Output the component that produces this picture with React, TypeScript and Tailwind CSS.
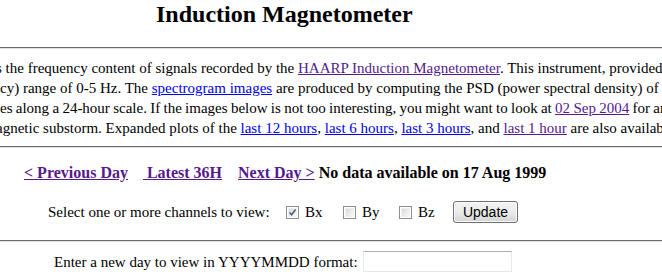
import React from "react";

function Hr() {
  return <div className="h-[2px] w-full border-t border-t-[#6a6a6a] border-b border-b-[#e2e2e2]" />;
}

function Checkbox({ checked }: { checked?: boolean }) {
  return (
    <span className="relative inline-block w-[13px] h-[13px] border border-[#8e8f8f] bg-white shrink-0">
      <span className="absolute inset-[1px] border border-[#f0f0f0] bg-gradient-to-br from-[#d9d9d9] to-[#fafafa]" />
      {checked && (
        <svg className="absolute left-[1px] top-[1px]" width="9" height="9" viewBox="0 0 9 9">
          <path d="M1.5 4.5 L3.6 6.8 L7.6 1.6" fill="none" stroke="#4a5f87" strokeWidth="1.6" />
        </svg>
      )}
    </span>
  );
}

const visited = "text-[#551a8b] underline";
const link = "text-[#0000ee] underline";

export default function App() {
  return (
    <div className="w-[662px] h-[280px] overflow-hidden bg-white text-black font-['Liberation_Serif','Times_New_Roman',serif]">
      <h1 className="pl-[156px] h-[28px] text-[24px] leading-[28px] font-bold whitespace-nowrap">
        Induction Magnetometer
      </h1>
      <div className="mt-[19px]">
        <Hr />
      </div>
      <div className="mt-[9px] text-[15px] leading-[20px] whitespace-nowrap overflow-hidden">
        <div className="ml-[-4px]">
          s the frequency content of signals recorded by the{" "}
          <a className={visited}>HAARP Induction Magnetometer</a>. This instrument, provided by
        </div>
        <div className="ml-[0px]">
          cy) range of 0-5 Hz. The <a className={link}>spectrogram images</a> are produced by computing the
          PSD (power spectral density) of the
        </div>
        <div className="ml-[0px] [word-spacing:-0.45px]">
          es along a 24-hour scale. If the images below is not too interesting, you might want to look at{" "}
          <a className={visited}>02 Sep 2004</a> for an
        </div>
        <div className="ml-[-4px]">
          agnetic substorm. Expanded plots of the <a className={link}>last 12 hours</a>,{" "}
          <a className={link}>last 6 hours</a>, <a className={link}>last 3 hours</a>, and{" "}
          <a className={visited}>last 1 hour</a> are also available.
        </div>
      </div>
      <div className="mt-[8px]">
        <Hr />
      </div>
      <div className="mt-[15px] h-[20px] flex items-center text-[16px] leading-[20px] font-bold whitespace-nowrap">
        <a className={`${visited} ml-[24px]`}>&lt; Previous Day</a>
        <a className={`${visited} ml-[15px]`}>&nbsp;Latest 36H</a>
        <a className={`${visited} ml-[16px]`}>Next Day &gt;</a>
        <span className="ml-[4px]">No data available on 17 Aug 1999</span>
      </div>
      <div className="mt-[18px] h-[22px] flex items-center text-[15px] leading-[20px] whitespace-nowrap">
        <span className="ml-[48px] w-[238px]">Select one or more channels to view:</span>
        <span className="w-[57px] flex items-center">
          <Checkbox checked />
          <span className="ml-[6px]">Bx</span>
        </span>
        <span className="w-[56px] flex items-center">
          <Checkbox />
          <span className="ml-[6px]">By</span>
        </span>
        <span className="w-[54px] flex items-center">
          <Checkbox />
          <span className="ml-[6px]">Bz</span>
        </span>
        <button className="w-[65px] h-[22px] rounded-[3px] border border-[#707070] bg-gradient-to-b from-[#f3f3f3] via-[#ebebeb] to-[#d4d4d4] shadow-[inset_0_0_0_1px_#fbfbfb] text-[14px] leading-[20px] font-['Liberation_Sans',Arial,sans-serif] text-black">
          Update
        </button>
      </div>
      <div className="mt-[17px]">
        <Hr />
      </div>
      <div className="mt-[9px] h-[21px] flex items-center text-[15px] leading-[20px] whitespace-nowrap">
        <span className="ml-[54px] w-[309px]">Enter a new day to view in YYYYMMDD format:</span>
        <input
          type="text"
          className="w-[149px] h-[21px] border border-[#e3e9ef] border-t-[#abadb3] bg-white outline-none"
        />
      </div>
    </div>
  );
}
